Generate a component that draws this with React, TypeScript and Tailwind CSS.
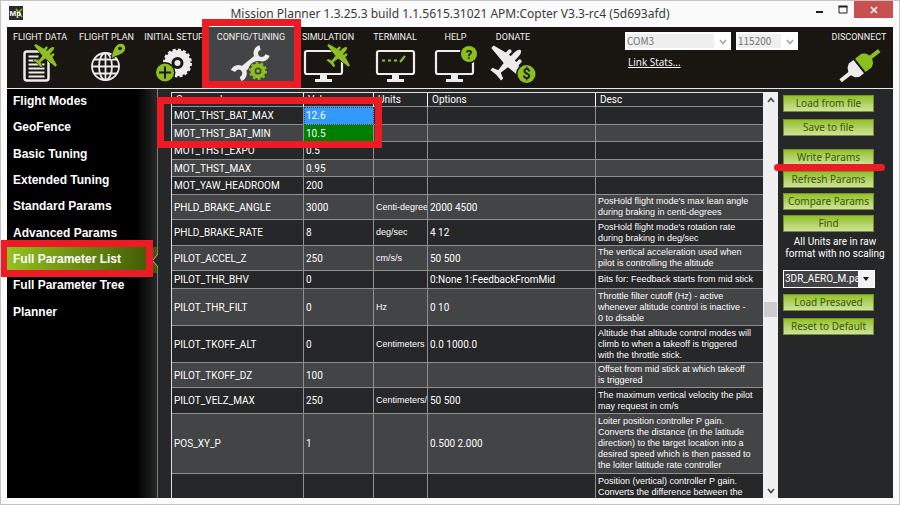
import type { ReactNode } from 'react'
import clsx from 'clsx'

const menuItems = [
  'Flight Modes',
  'GeoFence',
  'Basic Tuning',
  'Extended Tuning',
  'Standard Params',
  'Advanced Params',
  'Full Parameter List',
  'Full Parameter Tree',
  'Planner',
]

type Param = {
  name: string
  value: string
  units?: string
  options?: string
  desc?: string
  height: string
  mark?: 'selected' | 'changed'
}

const params: Param[] = [
  { name: 'MOT_THST_BAT_MAX', value: '12.6', height: 'h-[18px]', mark: 'selected' },
  { name: 'MOT_THST_BAT_MIN', value: '10.5', height: 'h-[17px]', mark: 'changed' },
  { name: 'MOT_THST_EXPO', value: '0.5', height: 'h-[18px]' },
  { name: 'MOT_THST_MAX', value: '0.95', height: 'h-[17px]' },
  { name: 'MOT_YAW_HEADROOM', value: '200', height: 'h-[18px]' },
  {
    name: 'PHLD_BRAKE_ANGLE',
    value: '3000',
    units: 'Centi-degrees',
    options: '2000 4500',
    desc: "PosHold flight mode's max lean angle\nduring braking in centi-degrees",
    height: 'h-[25px]',
  },
  {
    name: 'PHLD_BRAKE_RATE',
    value: '8',
    units: 'deg/sec',
    options: '4 12',
    desc: "PosHold flight mode's rotation rate\nduring braking in deg/sec",
    height: 'h-[26px]',
  },
  {
    name: 'PILOT_ACCEL_Z',
    value: '250',
    units: 'cm/s/s',
    options: '50 500',
    desc: 'The vertical acceleration used when\npilot is controlling the altitude',
    height: 'h-[25px]',
  },
  {
    name: 'PILOT_THR_BHV',
    value: '0',
    options: '0:None 1:FeedbackFromMid',
    desc: 'Bits for: Feedback starts from mid stick',
    height: 'h-[18px]',
  },
  {
    name: 'PILOT_THR_FILT',
    value: '0',
    units: 'Hz',
    options: '0 10',
    desc: 'Throttle filter cutoff (Hz) - active\nwhenever altitude control is inactive -\n0 to disable',
    height: 'h-[37px]',
  },
  {
    name: 'PILOT_TKOFF_ALT',
    value: '0',
    units: 'Centimeters',
    options: '0.0 1000.0',
    desc: 'Altitude that altitude control modes will\nclimb to when a takeoff is triggered\nwith the throttle stick.',
    height: 'h-[37px]',
  },
  {
    name: 'PILOT_TKOFF_DZ',
    value: '100',
    desc: 'Offset from mid stick at which takeoff\nis triggered',
    height: 'h-[25px]',
  },
  {
    name: 'PILOT_VELZ_MAX',
    value: '250',
    units: 'Centimeters/s',
    options: '50 500',
    desc: 'The maximum vertical velocity the pilot\nmay request in cm/s',
    height: 'h-[26px]',
  },
  {
    name: 'POS_XY_P',
    value: '1',
    options: '0.500 2.000',
    desc: 'Loiter position controller P gain.\nConverts the distance (in the latitude\ndirection) to the target location into a\ndesired speed which is then passed to\nthe loiter latitude rate controller',
    height: 'h-[60px]',
  },
  {
    name: '',
    value: '',
    desc: 'Position (vertical) controller P gain.\nConverts the difference between the',
    height: 'h-[26px]',
  },
]

const GREEN = '#8ebf21'
const WHITE = '#ececec'

export default function App() {
  return (
    <div className="relative flex h-screen flex-col overflow-hidden border border-[#c3c3c3] bg-[#fbfbfb] px-[6px] pb-[6px] font-['Roboto','Liberation_Sans',sans-serif] text-white">
      <TitleBar />
      <Toolbar />
      <div className="flex min-h-0 flex-1 bg-[#262728]">
        <Sidebar />
        <div className="flex min-w-0 flex-1 pt-[3px] pl-[13px]">
          <ParamTable />
          <ScrollBar />
        </div>
        <Actions />
      </div>
      <Highlights />
    </div>
  )
}

const TitleBar = () => {
  return (
    <header className="relative flex h-[26px] shrink-0 items-center justify-center">
      <svg className="absolute top-[5px] left-[2px] size-[14px]" viewBox="0 0 14 14">
        <rect width="14" height="14" fill="#2b2b2b" />
        <path d="M7 3l6 8M9 7l4-4" stroke={GREEN} strokeWidth="1.6" />
        <text x="0.5" y="10" fontSize="8" fontWeight="700" fill="#fff" fontFamily="Liberation Sans, sans-serif">
          Mp
        </text>
      </svg>
      <h1 className="font-['Noto_Sans',sans-serif] text-[12px] whitespace-nowrap text-[#3a3a3a]">
        Mission Planner 1.3.25.3 build 1.1.5615.31021 APM:Copter V3.3-rc4 (5d693afd)
      </h1>
      <div className="absolute top-0 right-0 flex h-[17px] text-[#1e1e1e]">
        <button aria-label="Minimize" className="flex w-[26px] items-center justify-center">
          <svg className="h-[17px] w-[10px]" viewBox="0 0 10 17">
            <path d="M2 11h7" stroke="currentColor" strokeWidth="2" />
          </svg>
        </button>
        <button aria-label="Maximize" className="flex w-[22px] items-center justify-center">
          <svg className="h-[17px] w-[10px]" viewBox="0 0 10 17">
            <path d="M1 5.5v6.5h8V5.5z" fill="none" stroke="currentColor" />
            <path d="M.5 5.5h9" stroke="currentColor" strokeWidth="2" />
          </svg>
        </button>
        <button aria-label="Close" className="flex w-[39px] items-center justify-center bg-[#c75050] text-white">
          <svg className="size-[8px]" viewBox="0 0 8 8">
            <path d="M1 1l6 6M7 1L1 7" stroke="currentColor" strokeWidth="1.6" />
          </svg>
        </button>
      </div>
    </header>
  )
}

const Toolbar = () => {
  return (
    <nav className="flex h-[62px] shrink-0 items-start border-b border-[#e8e8e8] bg-[#1a1713] bg-[repeating-linear-gradient(#1b1814_0px,#181511_2px,#1b1814_4px)]">
      <ToolButton label="FLIGHT DATA" width="w-[66px]">
        <rect x="8.5" y="8.5" width="24" height="29" rx="2.5" fill="none" stroke={WHITE} strokeWidth="2.5" />
        <path d="M12.5 13.5h10M12.5 17.5h12M12.5 21.5h16M12.5 25.5h16M12.5 29.5h16M12.5 33.5h16" stroke={WHITE} strokeWidth="1.8" />
        <Plane x={30} y={12} fill={GREEN} outline />
      </ToolButton>
      <ToolButton label="FLIGHT PLAN" width="w-[67px]">
        <g fill="none" stroke={WHITE} strokeWidth="1.8">
          <circle cx="22.5" cy="23.5" r="13.5" />
          <ellipse cx="22.5" cy="23.5" rx="6.5" ry="13.5" />
          <path d="M22.5 10v27M9 23.5h27M11 16.5h23M11 30.5h23" />
        </g>
        <path d="M28 16C29 10 30.5 3 36 .5c5-1.5 8 3 6 7C40 12 33 12.5 28 16z" fill={GREEN} stroke="#1a1713" />
        <circle cx="37" cy="5.5" r="1.8" fill="#1a1713" />
      </ToolButton>
      <ToolButton label="INITIAL SETUP" width="w-[68px]">
        <circle cx="27.5" cy="20" r="9.5" fill="none" stroke={WHITE} strokeWidth="7" />
        <circle cx="27.5" cy="20" r="13" fill="none" stroke={WHITE} strokeWidth="3" strokeDasharray="3 2.1" />
        <circle cx="27.5" cy="20" r="3" fill={WHITE} />
        <circle cx="15" cy="29.5" r="10.5" fill="#1a1713" />
        <circle cx="15" cy="29.5" r="9" fill={GREEN} />
        <path d="M9 29.5h12M15 23.5v12" stroke="#1a1713" strokeWidth="2" />
      </ToolButton>
      <ToolButton label="CONFIG/TUNING" width="w-[86px]" active>
        <g fill="none" stroke={WHITE}>
          <path d="M33 4.5A6 6 0 1 0 40.5 12" strokeWidth="4.5" />
          <path d="M6 28A6 6 0 1 1 13.5 36" strokeWidth="4.5" />
          <path d="M31 14L15 27" strokeWidth="6.5" />
        </g>
        <circle cx="31" cy="28" r="10" fill="#434445" />
        <circle cx="31" cy="28" r="5.5" fill="none" stroke={GREEN} strokeWidth="4" />
        <circle cx="31" cy="28" r="8" fill="none" stroke={GREEN} strokeWidth="2" strokeDasharray="2.6 2.426" />
        <circle cx="31" cy="28" r="1.8" fill={GREEN} />
      </ToolButton>
      <ToolButton label="SIMULATION" width="w-[68px]">
        <Monitor x={0} />
        <Plane x={35} y={12} fill={GREEN} outline />
      </ToolButton>
      <ToolButton label="TERMINAL" width="w-[66px]">
        <Monitor x={5} />
        <path d="M11 17.5h3M17 17.5h3M23 17.5h3M29 19l5-6" stroke={GREEN} strokeWidth="2" />
      </ToolButton>
      <ToolButton label="HELP" width="w-[55px]">
        <Monitor x={3} />
        <circle cx="37" cy="11" r="9.5" fill="#1a1713" />
        <circle cx="37" cy="11" r="8" fill={GREEN} />
        <text x="37" y="16" textAnchor="middle" fontSize="13" fontWeight="700" fill="#1a1713">
          ?
        </text>
      </ToolButton>
      <ToolButton label="DONATE" width="w-[60px]">
        <Plane x={20} y={19} fill={WHITE} large />
        <circle cx="37.5" cy="31" r="10.5" fill="#1a1713" />
        <circle cx="37.5" cy="31" r="9" fill={GREEN} />
        <text x="37.5" y="36" textAnchor="middle" fontSize="14" fontWeight="700" fill="#1a1713">
          $
        </text>
      </ToolButton>
      <div className="ml-auto flex flex-col items-start pt-[5px] pr-[27px]">
        <div className="flex gap-[5px]">
          <PortSelect label="Port" value="COM3" width="w-[106px]" />
          <PortSelect label="Baud rate" value="115200" width="w-[62px]" />
        </div>
        <a href="#stats" className="mt-[4px] ml-[3px] font-['Open_Sans',sans-serif] text-[10px] leading-[16px] underline">
          Link Stats...
        </a>
      </div>
      <ToolButton label="DISCONNECT" width="w-[68px]">
        <g transform="translate(24.5 23) rotate(-38)">
          <path d="M-1-8.5h-6l-3.5 2.5-2 4H-24v4h11.5l2 4L-7 8.5h6z" fill={WHITE} />
          <path d="M1-8.5h8l3.5 2.5 2 4H25v4H14.5l-2 4L9 8.5H1z" fill={GREEN} />
        </g>
      </ToolButton>
    </nav>
  )
}

type ToolButtonProps = { label: string; width: string; active?: boolean; children: ReactNode }

const ToolButton = ({ label, width, active, children }: ToolButtonProps) => {
  return (
    <button className={clsx('flex h-[60px] shrink-0 flex-col items-center pt-[4px]', width, active && 'bg-[#434445]')}>
      <span className="text-[9px] leading-[12px] whitespace-nowrap text-[#f0f0f0]">{label}</span>
      <svg className="h-[42px] w-[48px] overflow-visible" viewBox="0 0 48 42">
        {children}
      </svg>
    </button>
  )
}

const Monitor = ({ x }: { x: number }) => {
  return (
    <g transform={`translate(${x} 0)`}>
      <rect x="1" y="8" width="37" height="23" rx="2" fill="none" stroke={WHITE} strokeWidth="2.2" />
      <path d="M16 32h7v4h5v3H11v-3h5z" fill={WHITE} />
    </g>
  )
}

type PlaneProps = { x: number; y: number; fill: string; outline?: boolean; large?: boolean }

const Plane = ({ x, y, fill, outline, large }: PlaneProps) => {
  return (
    <path
      transform={`translate(${x} ${y}) rotate(45) scale(${large ? 1.5 : 1})`}
      d="M0-11C1.5-11 2-8 2-6v2.5h1.5V-6l1.2-.8L6-6v3l9 2.5v2.2L2 3 1.2 9 5 10.5V12.5L0 12l-5 .5v-2L-1.2 9-2 3-15 1.7V-.5L-6-3v-3l1.3-.8L-3.5-6v2.5H-2V-6C-2-8-1.5-11 0-11z"
      fill={fill}
      stroke={outline ? '#1a1713' : 'none'}
      strokeWidth="1"
      paintOrder="stroke"
    />
  )
}

const PortSelect = ({ label, value, width }: { label: string; value: string; width: string }) => {
  return (
    <div className={clsx('relative h-[18px] bg-white p-[2px]', width)}>
      <select
        aria-label={label}
        defaultValue={value}
        className="block h-[14px] w-full appearance-none bg-[linear-gradient(to_left,#fff_15px,#efefef_15px)] font-['Noto_Sans_CJK_JP',sans-serif] text-[10px] leading-[14px] text-[#757575]"
      >
        <option>{value}</option>
      </select>
      <svg className="pointer-events-none absolute top-[7px] right-[4px] h-[6px] w-[8px]" viewBox="0 0 8 6">
        <path d="M1 1l3 3.5L7 1" fill="none" stroke="#a5a5a5" strokeWidth="1.5" />
      </svg>
    </div>
  )
}

const Sidebar = () => {
  return (
    <aside className="w-[151px] shrink-0 border-r border-[#7d7d7d] bg-[linear-gradient(to_right,#000_130px,#262728)]">
      <ul className="flex h-[237px] flex-col font-['Liberation_Sans',sans-serif] text-[12px] font-bold">
        {menuItems.map((item) => {
          const active = item === 'Full Parameter List'
          return (
            <li key={item} className="relative flex flex-1">
              <button
                className={clsx(
                  'w-full pb-[2px] pl-[6px] text-left',
                  active && 'bg-linear-to-r from-[#94c11f] to-[#405705]'
                )}
              >
                {item}
              </button>
              {active && (
                <svg className="absolute top-[7px] -right-px h-[13px] w-[6px]" viewBox="0 0 6 13">
                  <path d="M6 0L.5 6.5 6 13" fill="#262728" stroke="#b5b5b5" />
                </svg>
              )}
            </li>
          )
        })}
      </ul>
    </aside>
  )
}

const ParamTable = () => {
  return (
    <div className="min-w-0 flex-1 overflow-hidden border-t border-l border-[#e0e0e0]">
      <table className="w-full table-fixed border-separate border-spacing-0 text-[10px] leading-[11px]">
        <colgroup>
          <col className="w-[132px]" />
          <col className="w-[70px]" />
          <col className="w-[54px]" />
          <col className="w-[168px]" />
          <col />
        </colgroup>
        <thead>
          <tr className="h-[14px]">
            {['Command', 'Value', 'Units', 'Options', 'Desc'].map((title) => (
              <th
                key={title}
                className="border-r border-b border-r-white border-b-[#8f8f8f] p-0 pl-[4px] text-left font-normal last:border-r-0"
              >
                {title}
              </th>
            ))}
          </tr>
        </thead>
        <tbody>
          {params.map((param) => (
            <tr key={param.name} className={clsx('odd:bg-[#262728] even:bg-[#434445]', param.height)}>
              <Cell>{param.name}</Cell>
              <Cell mark={param.mark}>{param.value}</Cell>
              <Cell prose>{param.units}</Cell>
              <Cell>{param.options}</Cell>
              <Cell prose>{param.desc}</Cell>
            </tr>
          ))}
        </tbody>
      </table>
    </div>
  )
}

const Cell = ({ mark, prose, children }: { mark?: Param['mark']; prose?: boolean; children?: ReactNode }) => {
  return (
    <td
      className={clsx(
        'overflow-hidden border-r border-b border-[#8f8f8f] p-0 pl-[2px] align-middle whitespace-pre last:border-r-0',
        prose && "font-['Liberation_Sans',sans-serif] text-[9px]",
        mark === 'selected' && 'bg-[#3399ff] outline-1 -outline-offset-1 outline-dotted outline-[#1b4d80]',
        mark === 'changed' && 'bg-[#008000]'
      )}
    >
      {children}
    </td>
  )
}

const ScrollBar = () => {
  return (
    <div className="flex w-[15px] shrink-0 flex-col items-center bg-[#f0f0f0] text-[#505050]">
      <button aria-label="Scroll up" className="flex h-[15px] items-center">
        <svg className="h-[6px] w-[8px]" viewBox="0 0 8 6">
          <path d="M1 5l3-3.5L7 5" fill="none" stroke="currentColor" strokeWidth="1.8" />
        </svg>
      </button>
      <div className="flex w-full flex-1 flex-col px-px">
        <div className="flex-[195]" />
        <div className="h-[15px] bg-[#cdcdcd]" />
        <div className="flex-[166]" />
      </div>
      <button aria-label="Scroll down" className="flex h-[15px] items-center">
        <svg className="h-[6px] w-[8px]" viewBox="0 0 8 6">
          <path d="M1 1l3 3.5L7 1" fill="none" stroke="currentColor" strokeWidth="1.8" />
        </svg>
      </button>
    </div>
  )
}

const Actions = () => {
  return (
    <div className="flex w-[115px] shrink-0 flex-col items-start pt-[6px] pl-[5px] font-['Noto_Sans',sans-serif] text-[10px]">
      <ActionButton>Load from file</ActionButton>
      <ActionButton className="mt-[7px]">Save to file</ActionButton>
      <ActionButton className="mt-[13px]">Write Params</ActionButton>
      <ActionButton className="mt-[5px]">Refresh Params</ActionButton>
      <ActionButton className="mt-[5px]">Compare Params</ActionButton>
      <ActionButton className="mt-[5px]">Find</ActionButton>
      <p className="mt-[4px] w-full pr-[6px] text-center font-['Roboto',sans-serif] leading-[12px] whitespace-nowrap">
        All Units are in raw
        <br />
        format with no scaling
      </p>
      <div className="relative mt-[10px] h-[18px] w-[92px] border border-white bg-[#434445]">
        <select
          aria-label="Presaved file"
          className="block h-full w-full appearance-none pr-[16px] pl-px font-['Roboto',sans-serif] leading-[16px]"
        >
          <option>3DR_AERO_M.param</option>
        </select>
        <div className="pointer-events-none absolute inset-y-0 right-0 flex w-[16px] items-center justify-center bg-[#f2f2f2]">
          <svg className="h-[4px] w-[6px]" viewBox="0 0 6 4">
            <path d="M0 0h6L3 4z" fill="#111" />
          </svg>
        </div>
      </div>
      <ActionButton className="mt-[6px]">Load Presaved</ActionButton>
      <ActionButton className="mt-[7px]">Reset to Default</ActionButton>
    </div>
  )
}

const ActionButton = ({ className, children }: { className?: string; children: ReactNode }) => {
  return (
    <button
      className={clsx(
        'flex h-[17px] w-[91px] items-center justify-center border border-[#79902f] bg-linear-to-b from-[#94c11f] to-[#cde296] whitespace-nowrap text-[#405704]',
        className
      )}
    >
      {children}
    </button>
  )
}

// Red marker boxes drawn over the window to point at the steps.
const Highlights = () => {
  return (
    <div className="pointer-events-none">
      <div className="absolute top-[18px] left-[201px] h-[69px] w-[99px] border-[7px] border-[#ed1c24]" />
      <div className="absolute top-[96px] left-[156px] h-[51px] w-[225px] border-[7px] border-[#ed1c24]" />
      <div className="absolute top-[239px] -left-px h-[37px] w-[153px] border-[7px] border-[#ed1c24]" />
      <div className="absolute top-[163px] right-[14px] h-[7px] w-[111px] rounded-full bg-[#ed1c24]" />
    </div>
  )
}
